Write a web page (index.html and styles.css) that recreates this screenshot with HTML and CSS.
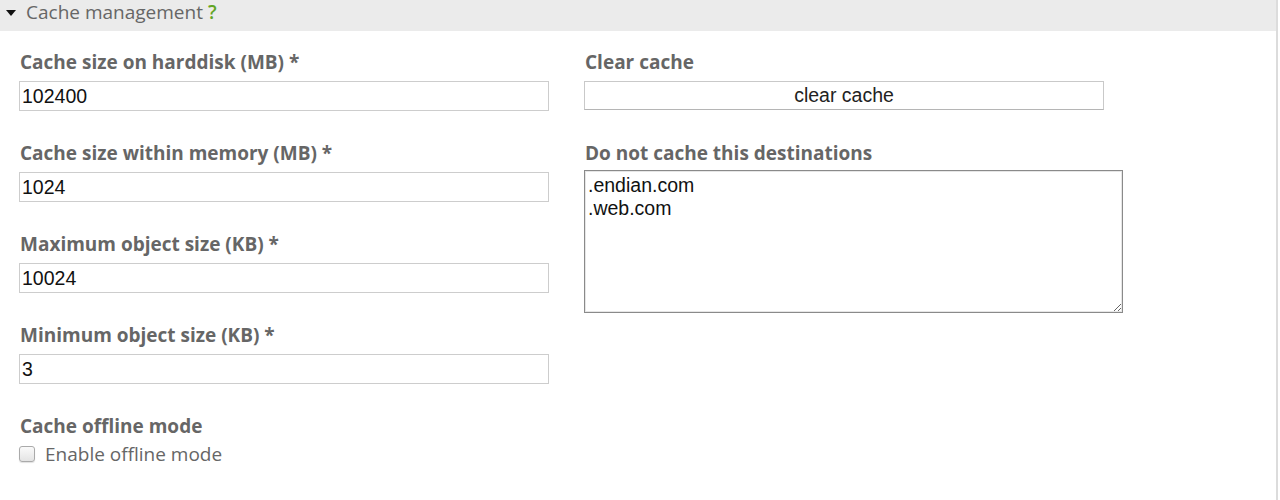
FILE: index.html
```html
<!DOCTYPE html>
<html>
<head>
<meta charset="utf-8">
<link rel="stylesheet" href="styles.css">
</head>
<body>
<div class="panel">
  <div class="panel-head">
    <span class="caret"></span>
    <span class="title">Cache management</span>
    <span class="help">?</span>
  </div>
  <div class="panel-body">
    <div class="col col-left">
      <div class="field">
        <label class="lbl">Cache size on harddisk (MB) *</label>
        <input class="txt" type="text" value="102400">
      </div>
      <div class="field">
        <label class="lbl">Cache size within memory (MB) *</label>
        <input class="txt" type="text" value="1024">
      </div>
      <div class="field">
        <label class="lbl">Maximum object size (KB) *</label>
        <input class="txt" type="text" value="10024">
      </div>
      <div class="field">
        <label class="lbl">Minimum object size (KB) *</label>
        <input class="txt" type="text" value="3">
      </div>
      <div class="field">
        <label class="lbl">Cache offline mode</label>
        <label class="check"><span class="box"></span><span class="check-text">Enable offline mode</span></label>
      </div>
    </div>
    <div class="col col-right">
      <div class="field">
        <label class="lbl">Clear cache</label>
        <button class="btn" type="button">clear cache</button>
      </div>
      <div class="field">
        <label class="lbl">Do not cache this destinations</label>
        <textarea class="area">.endian.com
.web.com</textarea>
      </div>
    </div>
  </div>
</div>
</body>
</html>
```

FILE: styles.css
```css
html, body {
  margin: 0;
  padding: 0;
  background: #fff;
}
body {
  font-family: "Open Sans", "Liberation Sans", sans-serif;
  color: #666;
}
.panel {
  width: 1276px;
  height: 500px;
  border-right: 2px solid #dcdcdc;
}
.panel-head {
  height: 31px;
  background: #ebebeb;
  display: flex;
  align-items: center;
  padding: 0 0 7px 6px;
  box-sizing: border-box;
}
.caret {
  width: 0;
  height: 0;
  border-left: 5px solid transparent;
  border-right: 5px solid transparent;
  border-top: 6px solid #111;
  margin-right: 10px;
  margin-top: 1px;
}
.title {
  font-size: 19px;
  color: #666;
  line-height: 24px;
}
.help {
  font-size: 19px;
  color: #62a524;
  margin-left: 5px;
  font-weight: 600;
  line-height: 24px;
}
.panel-body {
  display: flex;
  gap: 35px;
  padding: 19px 0 0 19px;
}
.col-left {
  width: 530px;
}
.col-right {
  width: 539px;
}
.field {
  display: flex;
  flex-direction: column;
  align-items: flex-start;
  margin-bottom: 30px;
}
.lbl {
  font-weight: 700;
  font-size: 19px;
  line-height: 24px;
  color: #666;
  padding-left: 1px;
  margin-bottom: 7px;
}
.txt {
  width: 530px;
  height: 30px;
  box-sizing: border-box;
  border: 1px solid #cdcdcd;
  padding: 0 2px;
  margin: 0;
  font-family: "Liberation Sans", Arial, sans-serif;
  font-size: 19.5px;
  color: #111;
  outline: none;
}
.btn {
  width: 520px;
  height: 29px;
  box-sizing: border-box;
  border: 1px solid #c9c9c9;
  border-bottom-color: #b5b5b5;
  background: #fff;
  margin: 0 0 1px 0;
  padding: 0;
  font-family: "Liberation Sans", Arial, sans-serif;
  font-size: 19.5px;
  color: #222;
}
.area {
  width: 539px;
  height: 143px;
  box-sizing: border-box;
  border: 1px solid #8a8a8a;
  box-shadow: inset 0 0 0 1px #e6e6e6;
  margin: -2px 0 0 0;
  padding: 3px 3px;
  font-family: "Liberation Sans", Arial, sans-serif;
  font-size: 19.5px;
  line-height: 23px;
  color: #111;
  resize: both;
  outline: none;
}
.check {
  display: flex;
  align-items: center;
  margin-top: -3px;
}
.box {
  width: 16px;
  height: 16px;
  box-sizing: border-box;
  border: 1px solid #aaa;
  border-radius: 3px;
  background: linear-gradient(#fafafa, #e4e4e4);
  box-shadow: 0 1px 1px rgba(0,0,0,0.12);
  margin-right: 10px;
}
.check-text {
  font-size: 19px;
  line-height: 24px;
  color: #666;
}
```
